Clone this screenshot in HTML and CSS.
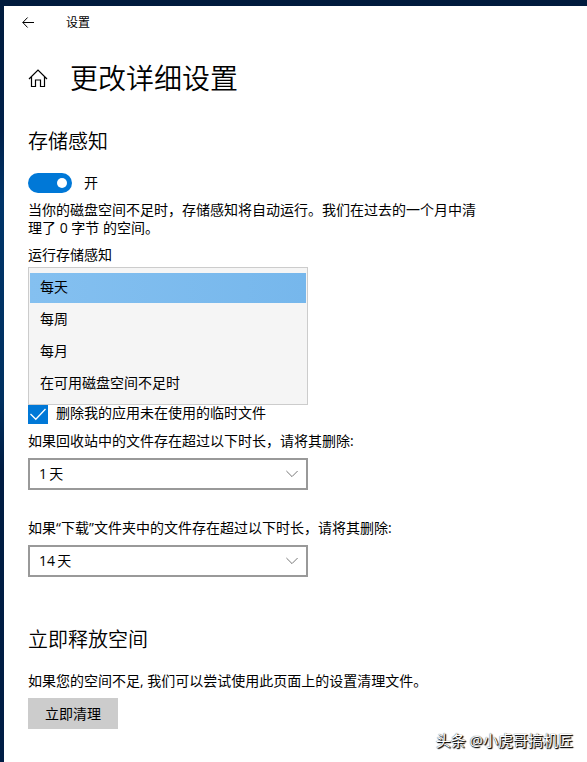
FILE: index.html
```html
<!DOCTYPE html>
<html lang="zh-CN">
<head>
    <meta charset="UTF-8">
    <meta name="viewport" content="width=device-width, initial-scale=1.0">
    <title>设置</title>
    <link rel="stylesheet" href="styles.css">
</head>
<body>

    <div class="window">
        <div class="titlebar">
            <svg class="back" width="12" height="12" viewBox="0 0 12 12">
                <path d="M12 5.5H0.8M5.6 0.5L0.8 5.5L5.6 10.5" />
            </svg>
            <span>设置</span>
        </div>

        <div class="page-header">
            <svg class="home" width="20" height="20" viewBox="0 0 20 20">
                <path d="M1 11L10 2L19 11M3.5 9V18.5H7.5V12H12.5V18.5H16.5V9" />
            </svg>
            <h1>更改详细设置</h1>
        </div>

        <h2>存储感知</h2>
        <div class="toggle-row">
            <span class="toggle"></span>
            <span>开</span>
        </div>
        <p class="desc">当你的磁盘空间不足时，存储感知将自动运行。我们在过去的一个月中清理了 0 字节 的空间。</p>

        <div class="label">运行存储感知</div>
        <ul class="options">
            <li class="selected">每天</li>
            <li>每周</li>
            <li>每月</li>
            <li>在可用磁盘空间不足时</li>
        </ul>

        <div class="check-row">
            <span class="checkbox">
                <svg width="20" height="20" viewBox="0 0 20 20">
                    <path d="M2.5 9L7.8 14.3L17.5 4" />
                </svg>
            </span>
            <span class="check-text">删除我的应用未在使用的临时文件</span>
        </div>

        <div class="label label-recycle">如果回收站中的文件存在超过以下时长，请将其删除:</div>
        <div class="select">
            <span>1 天</span>
            <svg width="12" height="8" viewBox="0 0 12 8">
                <path d="M0.4 1L6 6.6L11.6 1" />
            </svg>
        </div>

        <div class="label label-download">如果<span class="quote">“</span>下载<span class="quote">”</span>文件夹中的文件存在超过以下时长，请将其删除:</div>
        <div class="select">
            <span>14 天</span>
            <svg width="12" height="8" viewBox="0 0 12 8">
                <path d="M0.4 1L6 6.6L11.6 1" />
            </svg>
        </div>

        <h2 class="free-title">立即释放空间</h2>
        <div class="label label-free">如果您的空间不足, 我们可以尝试使用此页面上的设置清理文件。</div>
        <button class="btn-clean">立即清理</button>
    </div>

    <div class="watermark">头条 @小虎哥搞机匠</div>

</body>
</html>
```
FILE: styles.css
```css
* {
    box-sizing: border-box;
}

body {
    margin: 0;
    height: 762px;
    padding: 6px 0 0 4px;
    overflow: hidden;
    background: linear-gradient(to bottom, #001b3d 0, #00204a 130px, #003468 200px, #003060 400px, #001c42 470px, #001d45 762px);
    font-family: "Open Sans", "Noto Sans CJK SC", sans-serif;
    font-size: 14px;
    line-height: 18px;
    color: #000;
}

h1,
h2,
p,
ul {
    margin: 0;
    padding: 0;
}

svg {
    display: block;
    fill: none;
    stroke: #000;
}

.window {
    height: 756px;
    padding-left: 24px;
    background: #fff;
}

.titlebar {
    display: flex;
    align-items: center;
    height: 32px;
    padding-top: 1px;
    margin-left: -6px;
    font-size: 12px;
}

.back {
    margin-right: 32px;
}

.page-header {
    display: flex;
    align-items: center;
    height: 44px;
    margin-top: 18px;
}

.home {
    margin-right: 22px;
    stroke-width: 1.2;
}

h1 {
    font-size: 28px;
    font-weight: 350;
    line-height: 44px;
}

h2 {
    margin-top: 29px;
    font-size: 20px;
    font-weight: 350;
    line-height: 26px;
}

.toggle-row {
    display: flex;
    align-items: center;
    gap: 12px;
    height: 20px;
    margin-top: 18px;
}

.toggle {
    display: flex;
    align-items: center;
    justify-content: flex-end;
    width: 44px;
    height: 20px;
    padding-right: 5px;
    border-radius: 10px;
    background: #0078d7;
}

.toggle::after {
    content: '';
    width: 10px;
    height: 10px;
    border-radius: 50%;
    background: #fff;
}

.desc {
    width: 452px;
    margin-top: 8px;
}

.label {
    margin-top: 9px;
    white-space: nowrap;
}

.options {
    width: 280px;
    height: 138px;
    margin-top: 3px;
    padding: 5px 1px;
    border: 1px solid #ccc;
    background: #f5f5f5;
    list-style: none;
}

.options li {
    height: 32px;
    padding-left: 10px;
    line-height: 28px;
}

.options .selected {
    height: 30px;
    margin-bottom: 2px;
    background: linear-gradient(to right, #84c0f0, #76b7ec);
}

.check-row {
    display: flex;
    gap: 8px;
    height: 19px;
}

.checkbox {
    width: 20px;
    height: 19px;
    background: #0078d7;
}

.checkbox svg {
    stroke: #fff;
    stroke-width: 1.3;
}

.check-text {
    line-height: 16px;
}

.label-recycle {
    margin-top: 8px;
}

.select {
    display: flex;
    align-items: center;
    justify-content: space-between;
    width: 280px;
    height: 32px;
    margin-top: 8px;
    padding: 0 8px 0 9px;
    border: 2px solid #999;
    word-spacing: -1.5px;
}

.select svg {
    stroke: #777;
}

.label-download {
    margin-top: 29px;
}

.quote {
    display: inline-block;
    width: 5px;
}

.free-title {
    margin-top: 50px;
}

.label-free {
    margin-top: 19px;
}

.btn-clean {
    display: block;
    width: 90px;
    height: 31px;
    margin-top: 8px;
    padding: 0;
    border: none;
    background: #ccc;
    font: inherit;
    color: #000;
}

.watermark {
    position: absolute;
    right: 14px;
    bottom: 11px;
    font-size: 15px;
    line-height: 22px;
    color: #fff;
    text-shadow: 1px 1px 1px #000, 0 0 1px #222, 1px 1px 1px #444;
}
```
